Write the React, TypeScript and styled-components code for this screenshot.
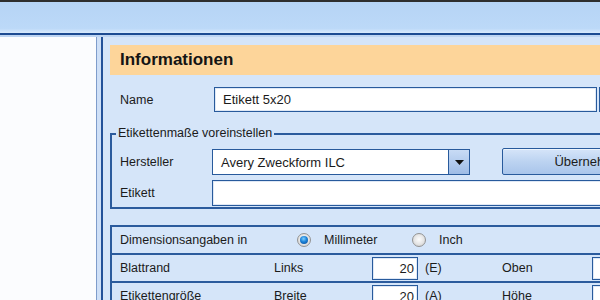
import React from 'react';
import styled, { createGlobalStyle } from 'styled-components';

const GlobalStyle = createGlobalStyle`
  html, body {
    margin: 0;
    padding: 0;
    background: #d5e5f9;
  }
  body {
    font-family: "Liberation Sans", Arial, sans-serif;
  }
`;

const Window = styled.div`
  width: 600px;
  height: 300px;
  overflow: hidden;
  display: flex;
  flex-direction: column;
  background: #d5e5f9;
  color: #1b1b1b;
  font-size: 12.5px;
`;

const TitleBar = styled.div`
  flex: none;
  height: 31px;
  border-top: 2px solid #2e2e2e;
  background: linear-gradient(#b6d4f5, #bcd9f8 85%, #d9eafc);
`;

const Rule = styled.div`
  flex: none;
  height: 2px;
  background: #1d4b92;
  border-bottom: 2px solid #bed5f2;
`;

const Body = styled.div`
  flex: 1;
  display: flex;
  min-height: 0;
`;

const LeftPane = styled.div`
  flex: none;
  width: 96px;
  background: #fbfcfe;
  border-right: 1px solid #7e9ccb;
`;

const Splitter = styled.div`
  flex: none;
  width: 4px;
  background: #cfe0f7;
  border-right: 2px solid #23529a;
`;

const Content = styled.div`
  flex: 1;
  min-width: 0;
  overflow: hidden;
  padding: 8px 0 0 7px;
  display: flex;
  flex-direction: column;
`;

const Header = styled.div`
  flex: none;
  height: 30px;
  padding-left: 10px;
  display: flex;
  align-items: center;
  background: #fdd59a;
  font-size: 17px;
  font-weight: bold;
  color: #141414;
`;

const NameRow = styled.div`
  margin-top: 12px;
  padding-left: 10px;
  display: grid;
  grid-template-columns: 92px 383px 20px;
  column-gap: 2px;
  align-items: center;
  height: 25px;
`;

const Label = styled.span`
  white-space: nowrap;
`;

const TextBox = styled.div<{ $height: number; $align?: string }>`
  box-sizing: border-box;
  height: ${p => p.$height}px;
  background: #fff;
  border: 1px solid #285a9c;
  box-shadow: inset 0 0 0 1px #dfe8f5;
  display: flex;
  align-items: center;
  justify-content: ${p => p.$align || 'flex-start'};
  padding: 0 ${p => (p.$align === 'flex-end' ? '3px' : '0')} 0
    ${p => (p.$align === 'flex-end' ? '0' : '8px')};
  white-space: nowrap;
  font-size: 13px;
`;

const SideButton = styled.div`
  height: 25px;
  box-sizing: border-box;
  border: 1px solid #285a9c;
  border-right: none;
  background: linear-gradient(#c9dcf6, #a7c3ea);
`;

const Group = styled.fieldset`
  margin: 14px 0 0 0;
  padding: 0 0 1px 4px;
  width: 560px;
  border: 2px solid #2b5b9d;
  border-right: none;
  min-width: 0;
`;

const Legend = styled.legend`
  padding: 0 2px;
  line-height: 15px;
  white-space: nowrap;
`;

const GroupGrid = styled.div`
  padding: 8px 0 0 4px;
  display: grid;
  grid-template-columns: 92px 258px 32px 180px;
  row-gap: 5px;
  align-items: center;
`;

const Combo = styled.div`
  box-sizing: border-box;
  height: 26px;
  display: flex;
  background: #fff;
  border: 1px solid #285a9c;
  font-size: 13px;
`;

const ComboText = styled.span`
  flex: 1;
  display: flex;
  align-items: center;
  padding-left: 8px;
  white-space: nowrap;
`;

const ComboArrow = styled.span`
  width: 20px;
  display: flex;
  align-items: center;
  justify-content: center;
  border-left: 1px solid #285a9c;
  background: linear-gradient(#c8dbf5, #9ebce6);
`;

const Button = styled.div`
  box-sizing: border-box;
  height: 27px;
  margin-top: -2px;
  display: flex;
  align-items: center;
  justify-content: center;
  border: 1px solid #285a9c;
  border-radius: 2px;
  background: linear-gradient(#d6e5f9, #bcd3f1 50%, #a9c5eb);
  box-shadow: inset 0 1px 0 #eef5fd;
  font-size: 13px;
  white-space: nowrap;
`;

const Wide = styled.div`
  grid-column: 2 / -1;
`;

const Table = styled.div`
  margin-top: 16px;
  width: 560px;
  border-top: 2px solid #2b5b9d;
  border-left: 2px solid #2b5b9d;
`;

const Row = styled.div<{ $cols: string }>`
  height: 26px;
  border-bottom: 2px solid #2b5b9d;
  padding-left: 8px;
  display: grid;
  grid-template-columns: ${p => p.$cols};
  align-items: center;
  white-space: nowrap;
`;

const Option = styled.label<{ $width: number }>`
  width: ${p => p.$width}px;
  display: flex;
  align-items: center;
  gap: 13px;
`;

const Radio = styled.span<{ $checked?: boolean }>`
  box-sizing: border-box;
  width: 14px;
  height: 14px;
  border-radius: 50%;
  border: 1px solid #939393;
  background: radial-gradient(circle at 50% 45%, #fdfdfd 0, #e4e4e4 55%, #c4c4c4 100%);
  display: flex;
  align-items: center;
  justify-content: center;

  &::after {
    content: '';
    display: ${p => (p.$checked ? 'block' : 'none')};
    width: 8px;
    height: 8px;
    border-radius: 50%;
    background: radial-gradient(circle at 45% 35%, #7fd0ff 0, #1c82d8 45%, #0a4690 100%);
  }
`;

const Options = styled.div`
  display: flex;
`;

const Unit = styled.span`
  padding-left: 7px;
`;

const NumBox = styled(TextBox)`
  margin-top: 1px;
`;

const measureCols = '154px 98px 46px 84px 90px 46px';

const measures = [
  { label: 'Blattrand', a: 'Links', av: '20', unit: '(E)', b: 'Oben', bv: '' },
  { label: 'Etikettengröße', a: 'Breite', av: '20', unit: '(A)', b: 'Höhe', bv: '' },
];

export default function App() {
  return (
    <Window>
      <GlobalStyle />
      <TitleBar />
      <Rule />
      <Body>
        <LeftPane />
        <Splitter />
        <Content>
          <Header>Informationen</Header>
          <NameRow>
            <Label>Name</Label>
            <TextBox $height={25}>Etikett 5x20</TextBox>
            <SideButton />
          </NameRow>
          <Group>
            <Legend>Etikettenmaße voreinstellen</Legend>
            <GroupGrid>
              <Label>Hersteller</Label>
              <Combo>
                <ComboText>Avery Zweckform ILC</ComboText>
                <ComboArrow>
                  <svg width="9" height="5" viewBox="0 0 9 5">
                    <path d="M0 0h9L4.5 5z" fill="#111" />
                  </svg>
                </ComboArrow>
              </Combo>
              <span />
              <Button>Übernehmen</Button>
              <Label>Etikett</Label>
              <Wide>
                <TextBox $height={26} />
              </Wide>
            </GroupGrid>
          </Group>
          <Table>
            <Row $cols="177px auto">
              <Label>Dimensionsangaben in</Label>
              <Options>
                <Option $width={115}>
                  <Radio $checked />
                  Millimeter
                </Option>
                <Option $width={80}>
                  <Radio />
                  Inch
                </Option>
              </Options>
            </Row>
            {measures.map(m => (
              <Row $cols={measureCols} key={m.label}>
                <Label>{m.label}</Label>
                <Label>{m.a}</Label>
                <NumBox $height={23} $align="flex-end">
                  {m.av}
                </NumBox>
                <Unit>{m.unit}</Unit>
                <Label>{m.b}</Label>
                <NumBox $height={23} $align="flex-end">
                  {m.bv}
                </NumBox>
              </Row>
            ))}
          </Table>
        </Content>
      </Body>
    </Window>
  );
}
